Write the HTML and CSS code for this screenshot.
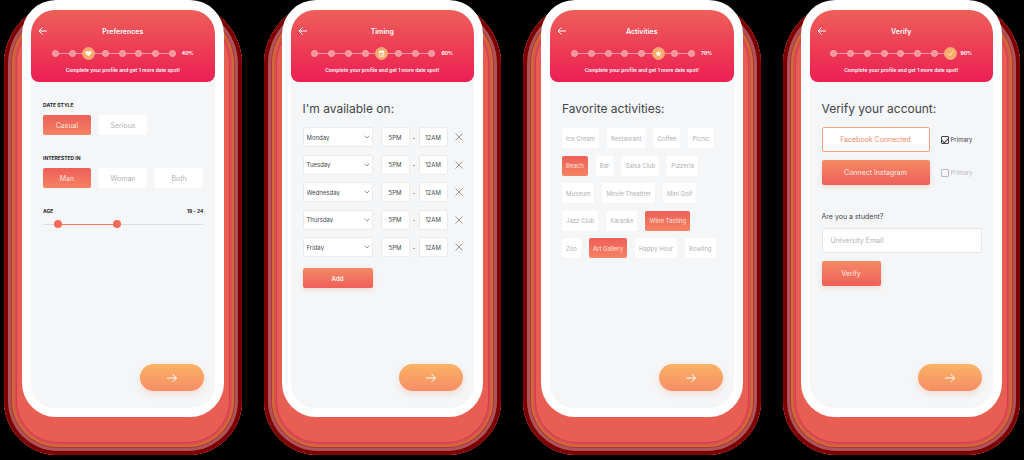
FILE: index.html
```html
<!DOCTYPE html>
<html lang="en">
<head>
<meta charset="utf-8">
<meta name="viewport" content="width=device-width, initial-scale=1">
<title>Profile setup</title>
<link rel="stylesheet" href="styles.css">
</head>
<body>
<svg class="symbols" aria-hidden="true">
  <symbol id="back" viewBox="0 0 10 8"><path d="M9 4H1M4.500.5 1 4l3.500 3.500"/></symbol>
  <symbol id="next" viewBox="0 0 10 10"><path d="M0 5h9.500M5.500 1l4 4-4 4"/></symbol>
  <symbol id="cross" viewBox="0 0 8 8"><path d="M.5.5l7 7M7.500.5l-7 7"/></symbol>
  <symbol id="down" viewBox="0 0 6 4"><path d="M.7.7 3 3 5.300.7"/></symbol>
</svg>
<main class="board">

  <section class="phone"><div class="screen">
    <header class="top">
      <div class="bar"><button class="back" aria-label="Back"><svg><use href="#back"/></svg></button><h1>Preferences</h1></div>
      <div class="progress">
        <ol class="steps"><li></li><li></li><li class="now"><svg viewBox="0 0 8 8"><path d="M4 7.200.8 4C-.4 2.500 1.400-.2 4 1.900 6.600-.2 8.400 2.500 7.200 4z"/></svg></li><li></li><li></li><li></li><li></li><li></li></ol>
        <span>40%</span>
      </div>
      <p>Complete your profile and get 1 more date spot!</p>
    </header>
    <div class="content groups">
      <div class="group"><h2 class="label">DATE STYLE</h2>
        <div class="choices"><button class="choice on">Casual</button><button class="choice">Serious</button></div></div>
      <div class="group"><h2 class="label">INTERESTED IN</h2>
        <div class="choices"><button class="choice on">Man</button><button class="choice">Woman</button><button class="choice">Both</button></div></div>
      <div class="age"><div class="age-head"><h2 class="label">AGE</h2><output class="label">19 - 24</output></div>
        <div class="range"><input type="range" aria-label="Minimum age" value="7"><input type="range" aria-label="Maximum age" value="46"></div></div>
    </div>
    <footer class="foot"><button class="next" aria-label="Next"><svg><use href="#next"/></svg></button></footer>
  </div></section>

  <section class="phone"><div class="screen">
    <header class="top">
      <div class="bar"><button class="back" aria-label="Back"><svg><use href="#back"/></svg></button><h1>Timing</h1></div>
      <div class="progress">
        <ol class="steps"><li></li><li></li><li></li><li></li><li class="now"><svg viewBox="0 0 8 8"><path fill-rule="evenodd" d="M1 1h1V.4h1V1h2V.4h1V1h1v6.500H1zM1.800 3v3.700h4.400V3zM4 4.200h1.500v1.500H4z"/></svg></li><li></li><li></li><li></li></ol>
        <span>60%</span>
      </div>
      <p>Complete your profile and get 1 more date spot!</p>
    </header>
    <div class="content">
      <h2 class="title">I'm available on:</h2>
      <div class="slots">
        <div class="slot"><div class="day"><select aria-label="Day"><option>Monday</option></select><svg><use href="#down"/></svg></div><button class="time">5PM</button><span>-</span><button class="time">12AM</button><button class="remove" aria-label="Remove Monday"><svg><use href="#cross"/></svg></button></div>
        <div class="slot"><div class="day"><select aria-label="Day"><option>Tuesday</option></select><svg><use href="#down"/></svg></div><button class="time">5PM</button><span>-</span><button class="time">12AM</button><button class="remove" aria-label="Remove Tuesday"><svg><use href="#cross"/></svg></button></div>
        <div class="slot"><div class="day"><select aria-label="Day"><option>Wednesday</option></select><svg><use href="#down"/></svg></div><button class="time">5PM</button><span>-</span><button class="time">12AM</button><button class="remove" aria-label="Remove Wednesday"><svg><use href="#cross"/></svg></button></div>
        <div class="slot"><div class="day"><select aria-label="Day"><option>Thursday</option></select><svg><use href="#down"/></svg></div><button class="time">5PM</button><span>-</span><button class="time">12AM</button><button class="remove" aria-label="Remove Thursday"><svg><use href="#cross"/></svg></button></div>
        <div class="slot"><div class="day"><select aria-label="Day"><option>Friday</option></select><svg><use href="#down"/></svg></div><button class="time">5PM</button><span>-</span><button class="time">12AM</button><button class="remove" aria-label="Remove Friday"><svg><use href="#cross"/></svg></button></div>
      </div>
      <button class="action add">Add</button>
    </div>
    <footer class="foot"><button class="next" aria-label="Next"><svg><use href="#next"/></svg></button></footer>
  </div></section>

  <section class="phone"><div class="screen">
    <header class="top">
      <div class="bar"><button class="back" aria-label="Back"><svg><use href="#back"/></svg></button><h1>Activities</h1></div>
      <div class="progress">
        <ol class="steps"><li></li><li></li><li></li><li></li><li></li><li class="now"><svg viewBox="0 0 8 8"><path d="M4 .6l1 2.300 2.500.2-1.900 1.700.6 2.400L4 5.900 1.800 7.200l.6-2.400L.5 3.100 3 2.900z"/></svg></li><li></li><li></li></ol>
        <span>70%</span>
      </div>
      <p>Complete your profile and get 1 more date spot!</p>
    </header>
    <div class="content">
      <h2 class="title">Favorite activities:</h2>
      <div class="tags">
        <div class="tag-row"><button class="tag">Ice Cream</button><button class="tag">Restaurant</button><button class="tag">Coffee</button><button class="tag">Picnic</button></div>
        <div class="tag-row"><button class="tag on">Beach</button><button class="tag">Bar</button><button class="tag">Salsa Club</button><button class="tag">Pizzeria</button></div>
        <div class="tag-row"><button class="tag">Museum</button><button class="tag">Movie Theather</button><button class="tag">Mini Golf</button></div>
        <div class="tag-row"><button class="tag">Jazz Club</button><button class="tag">Karaoke</button><button class="tag on">Wine Tasting</button></div>
        <div class="tag-row"><button class="tag">Zoo</button><button class="tag on">Art Gallery</button><button class="tag">Happy Hour</button><button class="tag">Bowling</button></div>
      </div>
    </div>
    <footer class="foot"><button class="next" aria-label="Next"><svg><use href="#next"/></svg></button></footer>
  </div></section>

  <section class="phone"><div class="screen">
    <header class="top">
      <div class="bar"><button class="back" aria-label="Back"><svg><use href="#back"/></svg></button><h1>Verify</h1></div>
      <div class="progress">
        <ol class="steps"><li></li><li></li><li></li><li></li><li></li><li></li><li></li><li class="now tick"><svg viewBox="0 0 8 8"><path d="M1.200 4.300l1.900 1.900L6.900 1.800"/></svg></li></ol>
        <span>90%</span>
      </div>
      <p>Complete your profile and get 1 more date spot!</p>
    </header>
    <div class="content">
      <h2 class="title">Verify your account:</h2>
      <div class="accounts">
        <div class="account"><button class="action outline">Facebook Connected</button><label class="primary"><input type="checkbox" checked>Primary</label></div>
        <div class="account"><button class="action">Connect Instagram</button><label class="primary off"><input type="checkbox">Primary</label></div>
      </div>
      <div class="student">
        <label for="email">Are you a student?</label>
        <input id="email" type="email" placeholder="University Email">
        <button class="action verify">Verify</button>
      </div>
    </div>
    <footer class="foot"><button class="next" aria-label="Next"><svg><use href="#next"/></svg></button></footer>
  </div></section>

</main>
</body>
</html>
```
FILE: styles.css
```css
* { box-sizing: border-box; margin: 0; padding: 0; }
body { background: #000; font-family: Inter, "Open Sans", sans-serif; color: #43454a; }
button, input, select { font: inherit; color: inherit; border: 0; background: none; }
svg { display: block; fill: none; stroke: currentColor; }
.symbols { display: none; }
.board {
  display: grid;
  grid-template-columns: repeat(4, 1fr);
  gap: 58px;
  padding: 0 22px 43px;
  overflow: hidden;
}
.phone {
  position: relative;
  background: #fff;
  border-radius: 34px;
  padding: 10px 9px 9px;
}
/* banded halo behind the device */
.phone::before {
  content: "";
  position: absolute;
  z-index: -1;
  inset: 2px -18px -38px;
  border-radius: 62px 62px 54px 54px;
  background: #e95e53;
  box-shadow:
    inset 0 0 0 4px #7d0000,
    inset 0 0 0 7px #ae555c,
    inset 0 0 0 8px #b8303c,
    inset 0 0 0 10px #cb7032,
    inset 0 0 0 12px #d9504f,
    inset 0 0 0 13px #d93a55;
}
.screen {
  display: flex;
  flex-direction: column;
  min-height: 398px;
  background: #f4f6f8;
  border-radius: 24px;
}
.top {
  display: flex;
  flex-direction: column;
  align-items: center;
  height: 72px;
  padding-top: 14px;
  border-radius: 24px 24px 8px 8px;
  background: linear-gradient(#ee5f59, #ec1f53);
  color: #fff;
}
.bar { display: flex; align-items: center; align-self: stretch; height: 14px; padding: 0 17px 0 7px; }
.bar h1 { flex: 1; text-align: center; font-size: 7px; font-weight: 600; }
.back { width: 10px; height: 8px; color: #fff; }
.back svg { width: 10px; height: 8px; }
.progress { display: flex; align-items: center; gap: 6px; height: 12px; margin-top: 9px; font-size: 5px; font-weight: 700; }
.steps {
  display: flex;
  align-items: center;
  justify-content: space-between;
  width: 124px;
  list-style: none;
  background: linear-gradient(#f59aa2, #f59aa2) center / 118px 1px no-repeat;
}
.steps li { width: 7px; height: 7px; border-radius: 50%; background: #f7939b; border: 1px solid #f9adb2; }
.steps .now {
  display: grid;
  place-items: center;
  width: 13px;
  height: 13px;
  margin: 0 -3px;
  border-color: #f7a486;
  background: #f9ac67;
}
.now svg { width: 7px; height: 7px; fill: #fff; stroke: none; }
.tick svg { fill: none; stroke: #fff; }
.top p { margin-top: 7px; font-size: 5px; line-height: 8px; font-weight: 600; white-space: nowrap; }
.content { flex: 1; padding: 17px 11px 0 12px; }
.title { font-size: 12px; line-height: 20px; font-weight: 400; white-space: nowrap; }
.label { font-size: 5px; line-height: 8px; font-weight: 700; color: #25272b; }
.group { height: 53px; }
.groups { padding-top: 19px; }
.choices { display: flex; gap: 8px; margin-top: 6px; }
.choice { width: 48px; height: 20px; border-radius: 2px; background: #fff; color: #b3b3b3; font-size: 7px; }
.choice.on, .tag.on { background: linear-gradient(#ee5f59, #f58262); color: #fde3dc; }
.age-head { display: flex; justify-content: space-between; }
.range { display: grid; align-items: center; height: 18px; background: linear-gradient(90deg, #dcdee1 16px, #f2775e 16px, #f2775e 73px, #dcdee1 73px) center / 100% 1px no-repeat; }
.range input { grid-area: 1 / 1; width: 100%; height: 8px; appearance: none; pointer-events: none; }
.range input::-webkit-slider-thumb { appearance: none; width: 8px; height: 8px; border-radius: 50%; background: #f26a57; pointer-events: auto; }
.foot { display: flex; justify-content: flex-end; padding: 0 11px 17px; }
.next {
  display: grid;
  place-items: center;
  width: 64px;
  height: 27px;
  border-radius: 14px;
  background: linear-gradient(#fbb264, #f58e66);
  box-shadow: 0 3px 6px #f58e6640;
  color: #fff;
}
.next svg { width: 10px; height: 10px; }
.slots { display: grid; align-content: space-between; height: 130px; margin: 8px -8px 0 0; }
.slot { display: grid; grid-template-columns: 78px 29px 9px 29px 1fr; height: 20px; align-items: stretch; font-size: 6px; }
.slot span { text-align: center; align-self: center; }
.slot select, .time { background: #fff; border: 1px solid #e9ebed; border-radius: 2px; }
.day { display: grid; width: 70px; align-items: center; justify-items: end; }
.day > * { grid-area: 1 / 1; }
.day svg { width: 6px; height: 4px; margin-right: 3px; color: #999; pointer-events: none; }
.day select { appearance: none; width: 100%; height: 100%; padding: 0 3px; }
.time { text-align: center; }
.remove { display: grid; place-items: center; color: #999; }
.remove svg { width: 8px; height: 8px; }
.action {
  border-radius: 2px;
  background: linear-gradient(#f58a66, #ee5f59);
  box-shadow: 0 2px 4px #f58e6640;
  color: #fde9e4;
  font-size: 7px;
}
.add { width: 70px; height: 20px; margin-top: 11px; font-size: 6px; font-weight: 700; }
.tags { display: grid; align-content: space-between; height: 130px; margin-top: 9px; }
.tag-row { display: flex; gap: 8px; }
.tag { height: 20px; padding: 0 4px; border-radius: 2px; background: #fff; color: #b0b0b0; font-size: 6px; white-space: nowrap; }
.accounts { display: grid; gap: 8px; margin-top: 8px; }
.account { display: flex; gap: 11px; align-items: center; }
.account .action { width: 108px; height: 25px; }
.account .outline { background: #fff; border: 1px solid #f4a27f; box-shadow: none; color: #f58a66; }
.primary { display: flex; align-items: center; gap: 2px; font-size: 6px; }
.primary input { display: grid; place-items: center; appearance: none; width: 8px; height: 8px; border: 1px solid currentColor; border-radius: 1px; }
.primary input:checked::before {
  content: "";
  width: 5px;
  height: 3px;
  border: solid currentColor;
  border-width: 0 0 1px 1px;
  transform: rotate(-45deg);
}
.off { color: #b8babd; }
.student { display: grid; justify-items: start; margin-top: 27px; font-size: 7px; }
.student input { width: 100%; height: 25px; margin: 7px 0 8px; padding: 0 8px; background: #fff; border: 1px solid #e4e6e8; border-radius: 2px; }
.student input::placeholder { color: #b3b3b3; }
.verify { width: 59px; height: 25px; }
```
